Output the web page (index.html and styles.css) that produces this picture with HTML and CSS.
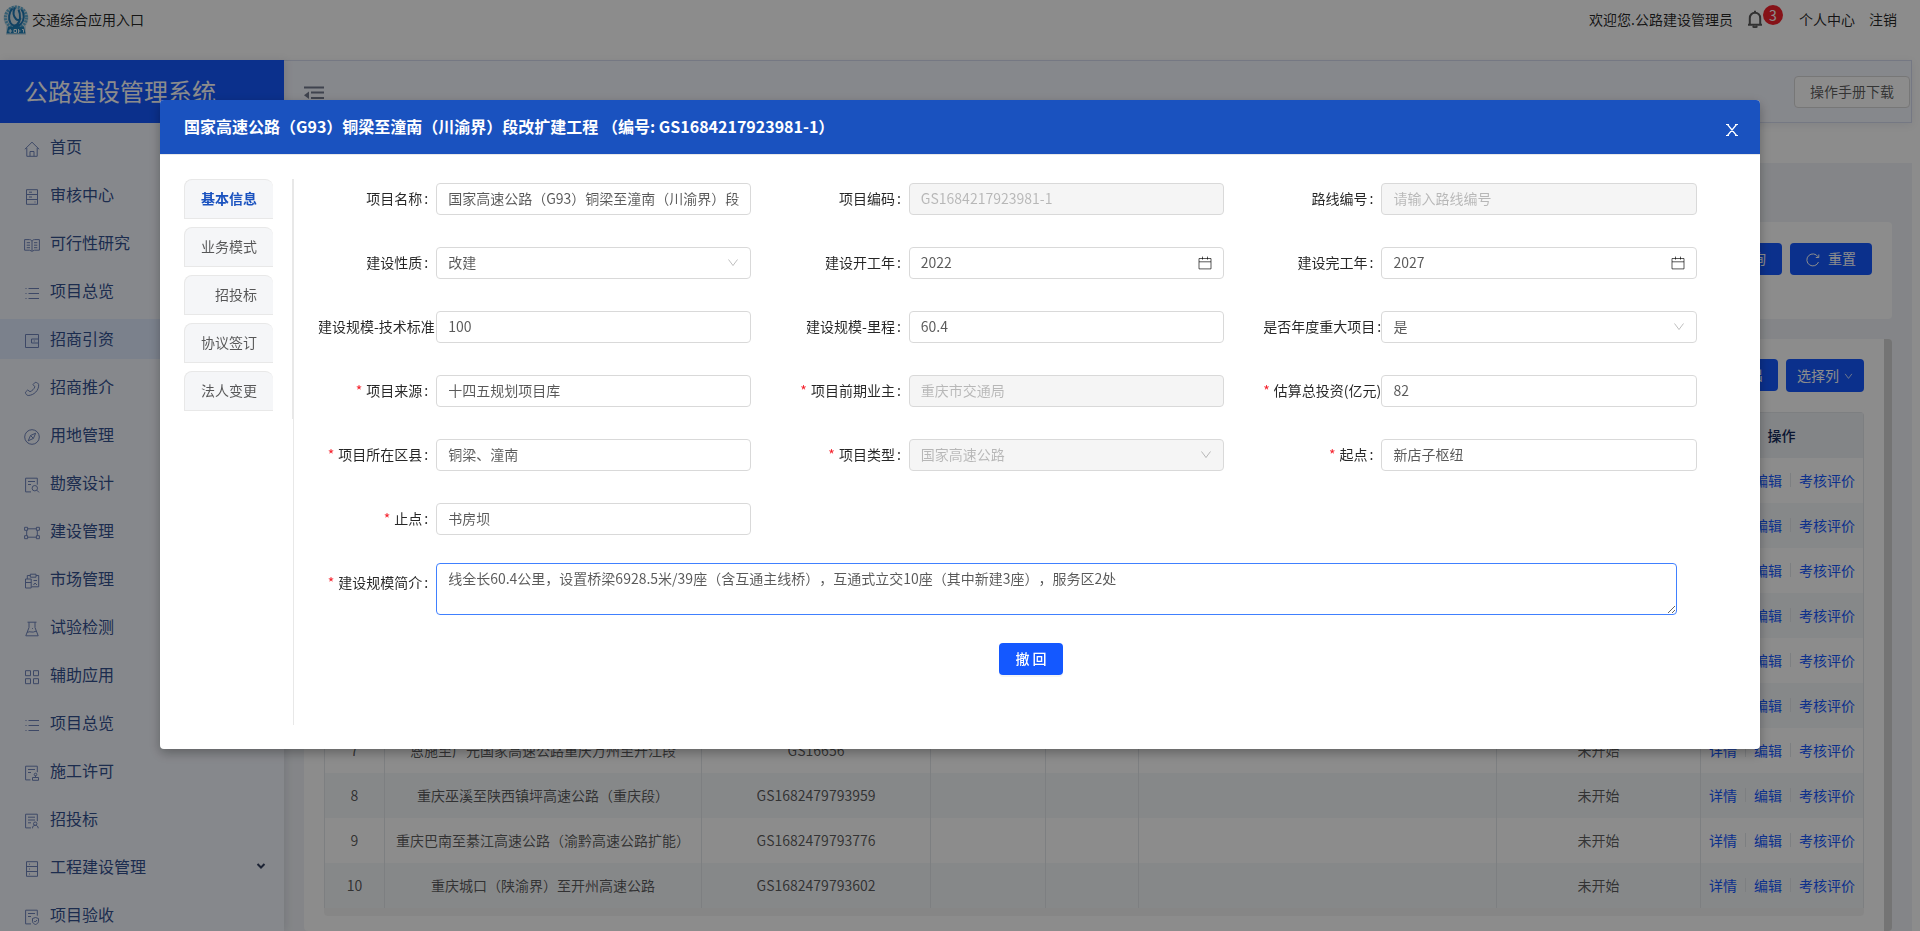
FILE: index.html
```html
<!DOCTYPE html>
<html lang="zh-CN">
<head>
<meta charset="utf-8">
<title>公路建设管理系统</title>
<link rel="stylesheet" href="styles.css">
</head>
<body>
<svg class="sprite" aria-hidden="true">
  <symbol id="i-home" viewBox="0 0 16 16"><path d="M.8 8.3 8 1.2l7.2 7.1M2.8 7v8.3h10.4V7M6 15.2v-4.7h4v4.7"/></symbol>
  <symbol id="i-server" viewBox="0 0 16 16"><path d="M2.5.7h11v14.6h-11zM2.5 5.5h11M2.5 10.5h11M5 3.2h3M5 8h3M10.5 13h1"/></symbol>
  <symbol id="i-read" viewBox="0 0 16 16"><path d="M.6 2.6h4.9c1.4 0 2.5.9 2.5 1.8 0-.9 1.100-1.800 2.500-1.800h4.900v10.600h-4.900L8 14.300l-2.500-1.100H.6zM8 4.400v9.400M2.700 5.700H6M2.700 8.200H6M2.700 10.700H6M10 5.700h3.300M10 8.200h3.300M10 10.700h3.300"/></symbol>
  <symbol id="i-list" viewBox="0 0 16 16"><path d="M4.500 3.500H15M4.500 8.500H15M4.500 13.500H15M1.500 3.500h1M1.500 8.500h1M1.500 13.500h1"/></symbol>
  <symbol id="i-wallet" viewBox="0 0 16 16"><path d="M1.500 1.500h13v13h-13zM14.500 6h-7v4h7M9.800 8h1"/></symbol>
  <symbol id="i-phone" viewBox="0 0 16 16"><path d="M11.200 1.300 9 3.600l1.900 2.200c-.8 2.100-2.600 4-4.900 4.900L3.700 9 1.400 11.200c.1 1.700 1.200 3.100 2.800 3.300 5.700-.2 10.700-5 10.500-10.800-.3-1.300-1.600-2.300-3.500-2.400z"/></symbol>
  <symbol id="i-compass" viewBox="0 0 16 16"><circle cx="8" cy="8" r="7.300"/><path d="m11.700 4.200-2.300 5.200-5.200 2.400 2.300-5.300zM6.500 6.500l2.900 2.900"/></symbol>
  <symbol id="i-search" viewBox="0 0 16 16"><path d="M7 14.900H1.600V1.200h11.700v6.500M4 4.500h7M4 7.500h3M12.800 13.200l2.200 2.200"/><circle cx="10.800" cy="11.200" r="2.700"/></symbol>
  <symbol id="i-gateway" viewBox="0 0 16 16"><path d="M.6 2.300h3v3h-3zM12.400 2.300h3v3h-3zM.6 10.700h3v3h-3zM12.400 10.700h3v3h-3zM3.600 3.800h8.800M3.600 12.200h8.800M2.700 5.300v5.400M13.300 5.300v5.400"/></symbol>
  <symbol id="i-market" viewBox="0 0 16 16"><path d="M3.300 6V2.500h3M12 2.500h2.700v11.300H7.500M6.300 1.200H12v3H6.300zM1.500 6h5.700v9H1.500zM1.500 9.500h5.700M9.500 7.500H13M9.500 12l1.500-2 2 2"/></symbol>
  <symbol id="i-flask" viewBox="0 0 16 16"><path d="M3.500 1.200h9M5 1.200v5.300L1.800 14.800h12.400L11 6.500V1.200M3.300 11.500c2.500-2 4.500 1 8.700-1.300M8 7.500h.8"/></symbol>
  <symbol id="i-apps" viewBox="0 0 16 16"><path d="M1.500 1.700h5v5h-5zM9.500 1.700h5v5h-5zM1.500 9.700h5v5h-5zM9.500 9.700h5v5h-5z"/></symbol>
  <symbol id="i-permit" viewBox="0 0 16 16"><path d="M6.500 14.900H1.600V1.200h11.700v6M4 4.500h7M4 7.500h3M8.500 12.500h6v2.800h-6zM11.500 12v-1.500"/><circle cx="11.500" cy="9.500" r="1.300"/></symbol>
  <symbol id="i-bid" viewBox="0 0 16 16"><path d="M7 14.900H1.600V1.200h11.700v7M4 4.200h7M4 7h7M4 9.800h3M8.500 15.300c0-2 1-3 2.700-3s3 1 3 3M9.500 15.300"/><circle cx="11.200" cy="10.700" r="1.700"/></symbol>
  <symbol id="i-db" viewBox="0 0 16 16"><path d="M2.500.7h11v14.600h-11zM2.500 5.500h11M2.500 10.500h11M5 3.200h1M5 8h1M5 13h1"/></symbol>
  <symbol id="i-accept" viewBox="0 0 16 16"><path d="M7 14.900H1.600V1.200h11.700v5.500M4 4.500h7M4 7.500h3M11.500 8.500l3 1v2.800c0 1.500-1.300 2.600-3 3.200-1.700-.6-3-1.700-3-3.200V9.500zM10.200 12l1 1 1.800-2"/></symbol>
  <symbol id="i-down" viewBox="0 0 12 12"><path d="m1.500 2.500 4.500 6 4.500-6"/></symbol>
  <symbol id="i-cal" viewBox="0 0 14 14"><path d="M1 2.500h12v10.400H1zM1 5.800h12M4.500.600v3M9.500.600v3"/></symbol>
</svg>

<div class="app">
  <header class="topbar">
    <svg class="logo" viewBox="0 0 28 32" aria-hidden="true">
      <circle class="halo" cx="14" cy="14" r="12.500"/>
      <path class="halo" d="M4 22h20v9H4z"/>
      <circle class="wreath" cx="14" cy="13.500" r="10.500"/>
      <path class="ring" d="M10.500 4.500C6.800 8 6 15 8.500 19c1.800 2.800 4.500 3 6.500 1.500 3.500-2.600 4-9.500 1.500-15M13 3.500c-2 4-1.800 8.500 1 11.500 1.500 1.600 3.800 1 4.800-.8M19.500 5.500c3.300 4.300 3 11-.7 14.500-2.200 2-5 3-7.800 3"/>
      <path class="plate" d="M6 22.500h16l1.500 7h-19z"/>
      <path class="marks" d="M6.500 27h3.500M8.200 25v4M12 25.500h2.500v3H12zM16.500 25v4M16.500 27h2M20 25.500h1.500v3"/>
    </svg>
    <span class="brand">交通综合应用入口</span>
    <nav class="usernav">
      <span>欢迎您.公路建设管理员</span>
      <button class="bell" type="button" aria-label="通知">
        <svg viewBox="0 0 16 18" aria-hidden="true"><path d="M1 14.700h14M2.800 14.500V8.300C2.800 5 5 2.800 8 2.800s5.200 2.200 5.200 5.500v6.200M8 2.800V.7M5.800 16.200c.7 1.300 3.700 1.300 4.400 0"/></svg>
        <span class="badge">3</span>
      </button>
      <a href="#">个人中心</a>
      <a href="#">注销</a>
    </nav>
  </header>

  <div class="layout">
    <aside class="sidebar">
      <h1 class="system">公路建设管理系统</h1>
      <nav class="menu">
        <a href="#"><svg><use href="#i-home"/></svg>首页</a>
        <a href="#"><svg><use href="#i-server"/></svg>审核中心</a>
        <a href="#"><svg><use href="#i-read"/></svg>可行性研究</a>
        <a href="#"><svg><use href="#i-list"/></svg>项目总览</a>
        <a href="#" class="current"><svg><use href="#i-wallet"/></svg>招商引资</a>
        <a href="#"><svg><use href="#i-phone"/></svg>招商推介</a>
        <a href="#"><svg><use href="#i-compass"/></svg>用地管理</a>
        <a href="#"><svg><use href="#i-search"/></svg>勘察设计</a>
        <a href="#"><svg><use href="#i-gateway"/></svg>建设管理</a>
        <a href="#"><svg><use href="#i-market"/></svg>市场管理</a>
        <a href="#"><svg><use href="#i-flask"/></svg>试验检测</a>
        <a href="#"><svg><use href="#i-apps"/></svg>辅助应用</a>
        <a href="#"><svg><use href="#i-list"/></svg>项目总览</a>
        <a href="#"><svg><use href="#i-permit"/></svg>施工许可</a>
        <a href="#"><svg><use href="#i-bid"/></svg>招投标</a>
        <a href="#"><svg><use href="#i-db"/></svg>工程建设管理<svg class="expand" viewBox="0 0 10 10"><path d="m1.500 3 3.500 3.500L8.500 3"/></svg></a>
        <a href="#"><svg><use href="#i-accept"/></svg>项目验收</a>
      </nav>
    </aside>

    <main class="main">
      <div class="toolbar">
        <button class="fold" type="button" aria-label="收起菜单">
          <svg viewBox="0 0 20 14" aria-hidden="true"><path d="M0 1.500h20M7 6.500h13M7 12h13"/><path class="solid" d="M5 5.500v7.500L0 9.200z"/></svg>
        </button>
        <button class="manual" type="button">操作手册下载</button>
      </div>
      <div class="content">
        <section class="card filters">
          <button class="primary" type="button">查询</button>
          <button class="primary" type="button"><svg viewBox="0 0 14 14" aria-hidden="true"><path d="M12.500 9A6 6 0 1 1 12 3.800M12.800 1.500v3h-3"/></svg>重置</button>
        </section>
        <section class="card listing">
          <div class="actions">
            <button class="primary" type="button">导出</button>
            <button class="primary columns" type="button">选择列<svg><use href="#i-down"/></svg></button>
          </div>
          <table class="grid">
            <colgroup><col class="c-no"><col class="c-name"><col class="c-code"><col class="c-a"><col class="c-b"><col class="c-c"><col class="c-state"><col class="c-ops"></colgroup>
            <thead><tr><th></th><th></th><th></th><th></th><th></th><th></th><th></th><th>操作</th></tr></thead>
            <tbody>
              <tr><td></td><td></td><td></td><td></td><td></td><td></td><td></td><td><div class="ops"><a href="#">详情</a><a href="#">编辑</a><a href="#">考核评价</a></div></td></tr>
              <tr><td></td><td></td><td></td><td></td><td></td><td></td><td></td><td><div class="ops"><a href="#">详情</a><a href="#">编辑</a><a href="#">考核评价</a></div></td></tr>
              <tr><td></td><td></td><td></td><td></td><td></td><td></td><td></td><td><div class="ops"><a href="#">详情</a><a href="#">编辑</a><a href="#">考核评价</a></div></td></tr>
              <tr><td></td><td></td><td></td><td></td><td></td><td></td><td></td><td><div class="ops"><a href="#">详情</a><a href="#">编辑</a><a href="#">考核评价</a></div></td></tr>
              <tr><td></td><td></td><td></td><td></td><td></td><td></td><td></td><td><div class="ops"><a href="#">详情</a><a href="#">编辑</a><a href="#">考核评价</a></div></td></tr>
              <tr><td></td><td></td><td></td><td></td><td></td><td></td><td></td><td><div class="ops"><a href="#">详情</a><a href="#">编辑</a><a href="#">考核评价</a></div></td></tr>
              <tr><td>7</td><td>恩施至广元国家高速公路重庆万州至开江段</td><td>GS16656</td><td></td><td></td><td></td><td>未开始</td><td><div class="ops"><a href="#">详情</a><a href="#">编辑</a><a href="#">考核评价</a></div></td></tr>
              <tr><td>8</td><td>重庆巫溪至陕西镇坪高速公路（重庆段）</td><td>GS1682479793959</td><td></td><td></td><td></td><td>未开始</td><td><div class="ops"><a href="#">详情</a><a href="#">编辑</a><a href="#">考核评价</a></div></td></tr>
              <tr><td>9</td><td>重庆巴南至綦江高速公路（渝黔高速公路扩能）</td><td>GS1682479793776</td><td></td><td></td><td></td><td>未开始</td><td><div class="ops"><a href="#">详情</a><a href="#">编辑</a><a href="#">考核评价</a></div></td></tr>
              <tr><td>10</td><td>重庆城口（陕渝界）至开州高速公路</td><td>GS1682479793602</td><td></td><td></td><td></td><td>未开始</td><td><div class="ops"><a href="#">详情</a><a href="#">编辑</a><a href="#">考核评价</a></div></td></tr>
            </tbody>
          </table>
          <div class="track"></div>
        </section>
      </div>
    </main>
  </div>
</div>

<div class="mask">
  <div class="dialog" role="dialog" aria-modal="true" aria-labelledby="dlg-title">
    <div class="dialog-head">
      <h2 id="dlg-title">国家高速公路（G93）铜梁至潼南（川渝界）段改扩建工程 （编号: GS1684217923981-1）</h2>
      <button class="close" type="button" aria-label="关闭"><svg viewBox="0 0 12 12" aria-hidden="true"><path d="m1.500.5 9 11M10.500.5l-9 11M0 .5h3M9 .5h3M0 11.500h3M9 11.500h3"/></svg></button>
    </div>
    <div class="dialog-body">
      <div class="tabs" role="tablist">
        <button class="tab on" type="button" role="tab" aria-selected="true">基本信息</button>
        <button class="tab" type="button" role="tab">业务模式</button>
        <button class="tab" type="button" role="tab">招投标</button>
        <button class="tab" type="button" role="tab">协议签订</button>
        <button class="tab" type="button" role="tab">法人变更</button>
      </div>
      <form class="form">
        <div class="fields">
          <div class="field"><label for="f1">项目名称</label><div class="control"><input id="f1" type="text" value="国家高速公路（G93）铜梁至潼南（川渝界）段改扩建工程"></div></div>
          <div class="field"><label for="f2">项目编码</label><div class="control"><input id="f2" type="text" value="GS1684217923981-1" disabled></div></div>
          <div class="field"><label for="f3">路线编号</label><div class="control"><input id="f3" type="text" placeholder="请输入路线编号" disabled></div></div>
          <div class="field"><label for="f4">建设性质</label><div class="control"><select id="f4"><option>改建</option></select><svg class="arrow"><use href="#i-down"/></svg></div></div>
          <div class="field"><label for="f5">建设开工年</label><div class="control"><input id="f5" type="text" value="2022"><svg class="cal"><use href="#i-cal"/></svg></div></div>
          <div class="field"><label for="f6">建设完工年</label><div class="control"><input id="f6" type="text" value="2027"><svg class="cal"><use href="#i-cal"/></svg></div></div>
          <div class="field"><label for="f7">建设规模-技术标准</label><div class="control"><input id="f7" type="text" value="100"></div></div>
          <div class="field"><label for="f8">建设规模-里程</label><div class="control"><input id="f8" type="text" value="60.4"></div></div>
          <div class="field"><label for="f9">是否年度重大项目</label><div class="control"><select id="f9"><option>是</option></select><svg class="arrow"><use href="#i-down"/></svg></div></div>
          <div class="field required"><label for="f10">项目来源</label><div class="control"><input id="f10" type="text" value="十四五规划项目库"></div></div>
          <div class="field required"><label for="f11">项目前期业主</label><div class="control"><input id="f11" type="text" value="重庆市交通局" disabled></div></div>
          <div class="field required"><label for="f12">估算总投资(亿元)</label><div class="control"><input id="f12" type="text" value="82"></div></div>
          <div class="field required"><label for="f13">项目所在区县</label><div class="control"><input id="f13" type="text" value="铜梁、潼南"></div></div>
          <div class="field required"><label for="f14">项目类型</label><div class="control"><select id="f14" disabled><option>国家高速公路</option></select><svg class="arrow"><use href="#i-down"/></svg></div></div>
          <div class="field required"><label for="f15">起点</label><div class="control"><input id="f15" type="text" value="新店子枢纽"></div></div>
          <div class="field required"><label for="f16">止点</label><div class="control"><input id="f16" type="text" value="书房坝"></div></div>
          <div class="field wide required"><label for="f17">建设规模简介</label><div class="control"><textarea id="f17">线全长60.4公里，设置桥梁6928.5米/39座（含互通主线桥），互通式立交10座（其中新建3座），服务区2处</textarea></div></div>
        </div>
        <div class="submit"><button class="primary" type="button">撤 回</button></div>
      </form>
    </div>
  </div>
</div>
</body>
</html>
```
FILE: styles.css
```css
* { box-sizing: border-box; }
body, h1, h2 { margin: 0; }
body, button, input, select, textarea {
  font-family: "Noto Sans CJK SC", sans-serif;
  font-size: 14px;
  line-height: 22px;
  text-spacing-trim: space-all;
}
body { color: rgba(0, 0, 0, .85); background: #fff; overflow: hidden; }
a { color: inherit; text-decoration: none; }
button { padding: 0 0 2px; border: 0; background: none; color: inherit; cursor: pointer; }
svg { flex: none; fill: none; stroke: currentColor; }
.sprite { position: absolute; width: 0; height: 0; }

.app { display: flex; flex-direction: column; height: 100vh; }

/* Top bar */
.topbar { display: flex; align-items: flex-start; flex: none; height: 60px; padding: 4px 23px 0 2px; }
.logo { width: 28px; height: 32px; }
.logo .halo { fill: #d4e2ea; stroke: none; }
.logo .wreath { stroke: #62aed3; stroke-width: 3; stroke-dasharray: 2 1; }
.logo .ring { stroke: #1f78b4; stroke-width: 2; }
.logo .plate { fill: #1f80b8; stroke: none; }
.logo .marks { stroke: #e8f4fa; }
.brand { padding: 4px 2px; }
.usernav { display: flex; align-items: center; gap: 14px; margin-left: auto; padding-top: 4px; }
.bell { display: flex; position: relative; width: 38px; padding: 0; }
.bell svg { width: 16px; height: 18px; stroke-width: 2; color: rgba(0, 0, 0, .65); }
.badge {
  position: absolute; left: 16px; top: -5px; width: 20px; height: 20px;
  border-radius: 10px; background: #f5222d; color: #fff; line-height: 20px; text-align: center;
}

.layout { display: flex; flex: 1; min-height: 0; }

/* Sidebar */
.sidebar { flex: none; width: 284px; overflow: hidden; background: #f5f8ff; box-shadow: 2px 0 8px rgba(0, 20, 60, .1); z-index: 1; }
.system { height: 63px; padding-left: 24px; background: #1458ff; color: #fff; font-size: 24px; font-weight: 400; line-height: 62px; }
.menu { display: flex; flex-direction: column; gap: 8px; padding-top: 4px; }
.menu a { display: flex; align-items: center; flex: none; height: 40px; padding: 0 18px 2px 24px; color: #33508f; font-size: 16px; line-height: 38px; }
.menu svg { width: 16px; height: 16px; margin: 6px 10px 0 0; color: #6f84bb; stroke-width: 1; }
.menu .expand { width: 10px; height: 10px; margin: 0 0 0 auto; color: #33415f; stroke-width: 2; }
.menu .current { background: #e0ebff; }

/* Main area */
.main { display: flex; flex: 1; flex-direction: column; min-width: 0; }
.toolbar {
  display: flex; align-items: center; justify-content: space-between; flex: none; height: 63px;
  margin-right: 8px; padding: 0 1px 0 20px; border: 1px solid #d5dbef; border-left: 0; background: #f5f7ff;
  box-shadow: 0 2px 8px rgba(0, 20, 60, .08);
}
.fold svg { display: block; width: 20px; height: 14px; stroke-width: 2; color: #737a8e; }
.fold { padding: 2px 0 0; }
.fold .solid { fill: currentColor; stroke: none; }
.manual { height: 32px; padding: 0 15px 2px; border: 1px solid #d9d9d9; border-radius: 4px; background: #fff; color: rgba(0, 0, 0, .65); }
.content {
  display: flex; flex: 1; flex-direction: column; gap: 20px; min-height: 0; overflow: hidden;
  margin: 40px 8px 0 0; padding: 59px 20px 0; background: #f0f3f7;
}
.card { flex: none; border-radius: 4px; background: #fff; }
.filters { display: flex; justify-content: flex-end; gap: 8px; height: 97px; padding: 21px 20px; }
.primary {
  display: flex; align-items: center; justify-content: center; gap: 8px; height: 32px; padding: 0 15px 2px;
  border-radius: 4px; background: #1458ff; color: #fff;
}
.filters .primary { padding: 0 16px 2px; }
.primary svg { width: 14px; height: 14px; margin-top: 4px; }
.listing { flex: 1; padding: 20px 20px 0; border-right: 8px solid #d3d3d3; }
.actions { display: flex; justify-content: flex-end; gap: 8px; margin-bottom: 20px; }
.columns { gap: 5px; height: 33px; padding: 0 11px 2px; }
.columns svg { width: 9px; height: 9px; }
.grid { width: 100%; table-layout: fixed; border-spacing: 0; border: 1px solid #e4e7eb; border-bottom: 0; border-radius: 4px 4px 0 0; color: rgba(0, 0, 0, .65); }
.grid th, .grid td { height: 45px; padding: 0 0 2px; text-align: center; }
.grid th { background: #eff2f6; color: #152a5c; font-weight: 500; }
.grid td + td { border-left: 1px solid #e4e7eb; }
.grid tbody tr:nth-child(even) { background: #f5f7fa; }
.c-no { width: 59px; } .c-name { width: 317px; } .c-code { width: 229px; } .c-a { width: 115px; }
.c-b { width: 93px; } .c-state { width: 204px; } .c-ops { width: 163px; }
.ops { display: flex; align-items: center; justify-content: center; gap: 8px; color: #1458ff; }
.ops a { line-height: 14px; }
.ops a + a { padding-left: 8px; border-left: 1px solid #e4e7eb; }
.track { height: 8px; background: #f5f5f5; border-radius: 0 0 4px 4px; }

/* Dialog */
.mask { position: fixed; inset: 0; z-index: 10; padding-top: 100px; background: rgba(0, 0, 0, .45); }
.dialog { width: 83.3333%; margin: 0 auto; border-radius: 4px; background: #fff; box-shadow: 0 4px 12px rgba(0, 0, 0, .3); }
.dialog-head {
  display: flex; align-items: center; justify-content: space-between; height: 55px; padding: 0 22px 0 24px;
  border-bottom: 1px solid #e8e8e8; border-radius: 4px 4px 0 0; background: #1a52bf; color: #fff;
}
.dialog-head h2 { padding-bottom: 2px; font-size: 16px; font-weight: 700; line-height: 22px; }
.close { padding: 6px 0 0; }
.close svg { display: block; width: 12px; height: 12px; stroke-width: 1; }
.close path { stroke-width: 1.2; }
.dialog-body { display: flex; align-items: flex-start; padding: 24px; }
.tabs { display: flex; flex: none; flex-direction: column; gap: 8px; width: 109px; padding: 0 19px 8px 0; border-right: 1px solid #e8e8e8; }
.tab {
  height: 40px; padding: 0 16px 2px 0; border: 1px solid #e8e8e8; border-right: 0; border-radius: 8px 8px 0 0;
  background: #f5f6f8; color: rgba(0, 0, 0, .65); text-align: right;
}
.tab.on { color: #1a52bf; font-weight: 700; }
.form { flex: 1; min-width: 0; padding: 0 0 50px 24px; border-left: 1px solid #e8e8e8; }
.fields { display: grid; grid-template-columns: repeat(3, 1fr); row-gap: 24px; }
.field { display: flex; min-width: 0; min-height: 40px; }
.field label { flex: none; width: 25%; overflow: hidden; line-height: 38px; text-align: right; white-space: nowrap; }
.field label::after { content: ":"; margin: 0 8px 0 2px; }
.required label::before { content: "*"; margin-right: 4px; color: #f5222d; }
.control { position: relative; flex: none; width: 66.6667%; padding: 4px 0; }
.control input, .control select, .control textarea {
  display: block; width: 100%; height: 32px; margin: 0; padding: 0 11px 2px; border: 1px solid #d9d9d9;
  border-radius: 4px; background: #fff; color: rgba(0, 0, 0, .65); outline: 0; appearance: none;
}
.control input:disabled, .control select:disabled { background: #f5f5f5; color: rgba(0, 0, 0, .25); opacity: 1; }
.control ::placeholder { color: rgba(0, 0, 0, .25); }
.arrow, .cal { position: absolute; top: 14px; right: 12px; width: 12px; height: 12px; color: rgba(0, 0, 0, .25); pointer-events: none; }
.cal { top: 13px; width: 14px; height: 14px; color: rgba(0, 0, 0, .65); }
.wide { grid-column: 1 / -1; min-height: 56px; }
.wide label { width: 8.3333%; }
.wide .control { width: 87.5%; padding: 0; }
.control textarea { height: 52px; padding: 3px 11px; border-color: #4080ff; resize: vertical; }
.submit { display: flex; justify-content: center; padding: 24px 0 0; }
.submit .primary { width: 64px; margin-left: 8px; font-weight: 500; box-shadow: 0 2px 0 rgba(0, 0, 0, .045); }
```
